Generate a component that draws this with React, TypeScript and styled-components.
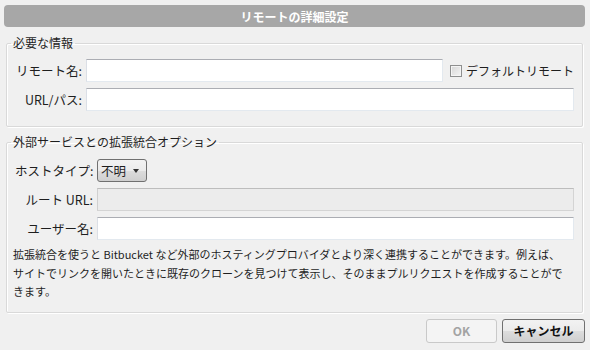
import React from "react";
import styled, { createGlobalStyle } from "styled-components";

const Global = createGlobalStyle`
  html, body { margin: 0; padding: 0; background: #f0f0f0; }
  body { font-family: "Noto Sans CJK JP", "Noto Sans", sans-serif; font-size: 12px; color: #1e1e1e; }
  * { box-sizing: border-box; }
`;

const Dialog = styled.div`
  width: 590px;
  height: 350px;
  padding: 5px 5px 0 4px;
  display: flex;
  flex-direction: column;
`;

const TitleBar = styled.div`
  height: 22px;
  border-radius: 4px;
  background: #a7a7a7;
  color: #fff;
  font-weight: bold;
  font-size: 12px;
  display: flex;
  align-items: center;
  justify-content: center;
`;

const Group = styled.fieldset<{ $top: number; $pt: number; $pb: number }>`
  margin: ${(p) => p.$top}px 2px 0 2px;
  min-width: 0;
  border: 1px solid #d9d9d9;
  border-radius: 2px;
  box-shadow: inset 1px 1px 0 #fff, 1px 1px 0 #fff;
  padding: ${(p) => p.$pt}px 8px ${(p) => p.$pb}px 8px;
`;

const Legend = styled.legend`
  margin-left: -4px;
  padding: 0 2px;
  font-size: 12px;
  line-height: 16px;
  color: #1e1e1e;
`;

const Form = styled.div<{ $label: number }>`
  display: grid;
  grid-template-columns: ${(p) => p.$label}px 1fr;
  column-gap: 4px;
  row-gap: 6px;
  align-items: center;
`;

const Label = styled.label`
  text-align: right;
  white-space: nowrap;
  font-size: 12.5px;
`;

const Field = styled.div`
  display: flex;
  align-items: center;
  min-width: 0;
`;

const Input = styled.input<{ $disabled?: boolean }>`
  flex: 1;
  min-width: 0;
  height: 23px;
  margin: 0;
  border: 1px solid ${(p) => (p.$disabled ? "#d4d4d4" : "#e3e9ef")};
  border-top-color: ${(p) => (p.$disabled ? "#bdbdbd" : "#abadb3")};
  border-left-color: ${(p) => (p.$disabled ? "#d0d0d0" : "#dbdfe6")};
  background: ${(p) => (p.$disabled ? "#ececec" : "#ffffff")};
  font: inherit;
  outline: none;
  padding: 0 4px;
`;

const CheckLabel = styled.label`
  display: flex;
  align-items: center;
  gap: 4px;
  margin-left: 7px;
  white-space: nowrap;
  font-size: 12px;
`;

const CheckBox = styled.span`
  width: 12px;
  height: 12px;
  border: 1px solid #8e8f8f;
  background: linear-gradient(135deg, #d6d6d6 0%, #f4f4f4 100%);
  box-shadow: inset 0 0 0 1px #f4f4f4;
`;

const SelectButton = styled.button`
  width: 50px;
  height: 23px;
  margin: 0;
  padding: 0 0 0 3px;
  border: 1px solid #707070;
  border-radius: 3px;
  background: linear-gradient(#f2f2f2 0%, #ebebeb 50%, #dddddd 51%, #cfcfcf 100%);
  font: inherit;
  font-size: 12.5px;
  color: #1e1e1e;
  display: flex;
  align-items: center;
  gap: 7px;
`;

const Arrow = styled.span`
  width: 0;
  height: 0;
  border-left: 3.5px solid transparent;
  border-right: 3.5px solid transparent;
  border-top: 4px solid #333;
`;

const Description = styled.p`
  margin: 5px 0 0 -2px;
  font-size: 11px;
  line-height: 18.5px;
  white-space: nowrap;
  color: #1e1e1e;
`;

const Footer = styled.div`
  display: flex;
  justify-content: flex-end;
  gap: 5px;
  margin-top: 6px;
`;

const Button = styled.button<{ $w: number; $disabled?: boolean }>`
  width: ${(p) => p.$w}px;
  height: 24px;
  margin: 0;
  border-radius: 3px;
  font: inherit;
  font-weight: bold;
  font-size: 12px;
  border: 1px solid ${(p) => (p.$disabled ? "#c9c9c9" : "#707070")};
  color: ${(p) => (p.$disabled ? "#a3a3a3" : "#111")};
  background: ${(p) =>
    p.$disabled
      ? "#f4f4f4"
      : "linear-gradient(#f2f2f2 0%, #ebebeb 50%, #dddddd 51%, #cfcfcf 100%)"};
`;

export default function App() {
  return (
    <Dialog>
      <Global />
      <TitleBar>リモートの詳細設定</TitleBar>
      <Group $top={8} $pt={8} $pb={15}>
        <Legend>必要な情報</Legend>
        <Form $label={67}>
          <Label>リモート名:</Label>
          <Field>
            <Input />
            <CheckLabel>
              <CheckBox />
              デフォルトリモート
            </CheckLabel>
          </Field>
          <Label>URL/パス:</Label>
          <Field>
            <Input />
          </Field>
        </Form>
      </Group>
      <Group $top={7} $pt={9} $pb={11}>
        <Legend>外部サービスとの拡張統合オプション</Legend>
        <Form $label={78}>
          <Label>ホストタイプ:</Label>
          <Field>
            <SelectButton>
              不明
              <Arrow />
            </SelectButton>
          </Field>
          <Label>ルート URL:</Label>
          <Field>
            <Input $disabled disabled />
          </Field>
          <Label>ユーザー名:</Label>
          <Field>
            <Input />
          </Field>
        </Form>
        <Description>
          拡張統合を使うと Bitbucket など外部のホスティングプロバイダとより深く連携することができます。例えば、
          <br />
          サイトでリンクを開いたときに既存のクローンを見つけて表示し、そのままプルリクエストを作成することがで
          <br />
          きます。
        </Description>
      </Group>
      <Footer>
        <Button $w={71} $disabled disabled>
          OK
        </Button>
        <Button $w={83}>キャンセル</Button>
      </Footer>
    </Dialog>
  );
}
